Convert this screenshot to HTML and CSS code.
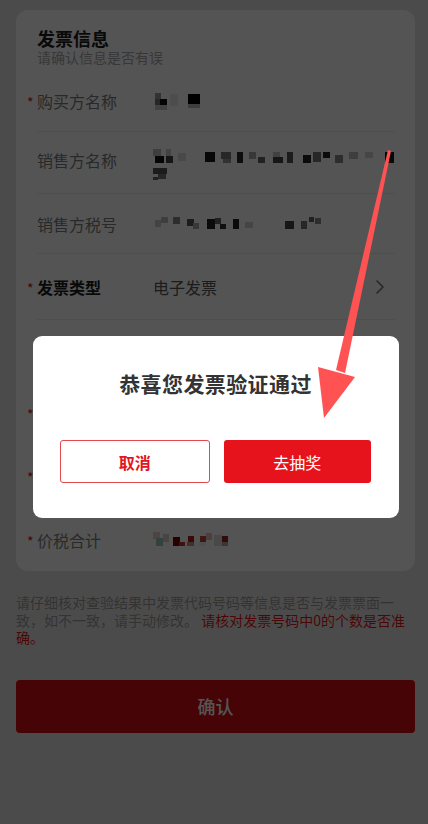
FILE: index.html
```html
<!DOCTYPE html>
<html lang="zh-CN">
<head>
<meta charset="utf-8">
<meta name="viewport" content="width=device-width, initial-scale=1">
<title>发票信息</title>
<link rel="stylesheet" href="styles.css">
</head>
<body>
<div class="page">
  <section class="card">
    <div class="card-head">
      <h1 class="card-title">发票信息</h1>
      <p class="card-sub">请确认信息是否有误</p>
    </div>

    <div class="row">
      <span class="label"><span class="star">*</span>购买方名称</span>
      <span class="value">
        <svg class="mosaic" width="60" height="20" viewBox="0 0 60 20">
          <rect x="2" y="2" width="6" height="6" fill="#9a9a9a"/>
          <rect x="2" y="8" width="5" height="6" fill="#777"/>
          <rect x="7" y="8" width="7" height="6" fill="#111"/>
          <rect x="2" y="14" width="12" height="5" fill="#c8c8c8"/>
          <rect x="17" y="3" width="8" height="12" fill="#e8e8e8"/>
          <rect x="35" y="3" width="12" height="10" fill="#000"/>
          <rect x="35" y="13" width="12" height="4" fill="#bbb"/>
        </svg>
      </span>
    </div>

    <div class="row row-top">
      <span class="label">销售方名称</span>
      <span class="value">
        <svg class="mosaic" width="242" height="34" viewBox="0 0 242 34">
          <rect x="0" y="0" width="8" height="7" fill="#bbb"/>
          <rect x="2" y="7" width="9" height="7" fill="#111"/>
          <rect x="13" y="7" width="7" height="7" fill="#444"/>
          <rect x="13" y="0" width="5" height="7" fill="#ccc"/>
          <rect x="25" y="4" width="8" height="8" fill="#ddd"/>
          <rect x="52" y="3" width="10" height="10" fill="#1a1a1a"/>
          <rect x="68" y="3" width="10" height="7" fill="#777"/>
          <rect x="70" y="10" width="8" height="4" fill="#999"/>
          <rect x="84" y="3" width="6" height="11" fill="#2a2a2a"/>
          <rect x="96" y="3" width="7" height="7" fill="#aaa"/>
          <rect x="105" y="8" width="7" height="6" fill="#666"/>
          <rect x="120" y="3" width="7" height="7" fill="#c4c4c4"/>
          <rect x="120" y="8" width="10" height="6" fill="#444"/>
          <rect x="134" y="3" width="6" height="11" fill="#555"/>
          <rect x="150" y="6" width="8" height="8" fill="#222"/>
          <rect x="160" y="3" width="8" height="10" fill="#777"/>
          <rect x="170" y="3" width="7" height="6" fill="#222"/>
          <rect x="182" y="6" width="8" height="8" fill="#888"/>
          <rect x="196" y="3" width="9" height="7" fill="#bbb"/>
          <rect x="212" y="3" width="8" height="6" fill="#d4d4d4"/>
          <rect x="232" y="3" width="9" height="11" fill="#1a1a1a"/>
          <rect x="0" y="19" width="14" height="6" fill="#555"/>
          <rect x="5" y="25" width="8" height="5" fill="#777"/>
          <rect x="0" y="28" width="5" height="3" fill="#666"/>
        </svg>
      </span>
    </div>

    <div class="row row-short">
      <span class="label">销售方税号</span>
      <span class="value">
        <svg class="mosaic" width="180" height="16" viewBox="0 0 180 16">
          <rect x="2" y="4" width="6" height="7" fill="#ccc"/>
          <rect x="8" y="1" width="7" height="6" fill="#bbb"/>
          <rect x="20" y="1" width="7" height="7" fill="#888"/>
          <rect x="34" y="3" width="7" height="7" fill="#555"/>
          <rect x="40" y="7" width="6" height="6" fill="#aaa"/>
          <rect x="54" y="3" width="8" height="10" fill="#222"/>
          <rect x="62" y="2" width="6" height="6" fill="#666"/>
          <rect x="67" y="8" width="6" height="5" fill="#333"/>
          <rect x="80" y="3" width="6" height="10" fill="#222"/>
          <rect x="92" y="6" width="8" height="6" fill="#d0d0d0"/>
          <rect x="132" y="5" width="9" height="8" fill="#444"/>
          <rect x="148" y="5" width="6" height="8" fill="#777"/>
          <rect x="156" y="1" width="5" height="5" fill="#666"/>
          <rect x="162" y="2" width="6" height="6" fill="#888"/>
        </svg>
      </span>
    </div>

    <div class="row row-select">
      <span class="label label-strong"><span class="star">*</span>发票类型</span>
      <span class="value value-text">电子发票</span>
      <svg class="chevron" width="10" height="16" viewBox="0 0 10 16">
        <path d="M2 2 L8 8 L2 14" fill="none" stroke="#777" stroke-width="1.6" stroke-linecap="round" stroke-linejoin="round"/>
      </svg>
    </div>

    <div class="row">
      <span class="label">发票代码</span>
      <span class="value value-text">请输入发票代码</span>
    </div>

    <div class="row">
      <span class="label"><span class="star">*</span>发票号码</span>
      <span class="value value-text">请输入发票号码</span>
    </div>

    <div class="row row-tall">
      <span class="label"><span class="star">*</span>开票日期</span>
      <span class="value value-text">请选择开票日期</span>
    </div>

    <div class="row row-last">
      <span class="label"><span class="star">*</span>价税合计</span>
      <span class="value">
        <svg class="mosaic" width="90" height="16" viewBox="0 0 90 16">
          <rect x="0" y="0" width="7" height="7" fill="#ecc"/>
          <rect x="3" y="6" width="7" height="8" fill="#9cb"/>
          <rect x="10" y="2" width="6" height="8" fill="#dcc"/>
          <rect x="20" y="5" width="7" height="9" fill="#700"/>
          <rect x="26" y="10" width="6" height="4" fill="#b33"/>
          <rect x="35" y="4" width="6" height="6" fill="#a22"/>
          <rect x="34" y="10" width="7" height="4" fill="#c88"/>
          <rect x="47" y="4" width="6" height="6" fill="#b44"/>
          <rect x="46" y="10" width="7" height="4" fill="#eee"/>
          <rect x="53" y="1" width="6" height="7" fill="#ebb"/>
          <rect x="61" y="3" width="8" height="11" fill="#ddd"/>
          <rect x="69" y="4" width="6" height="6" fill="#922"/>
          <rect x="69" y="10" width="6" height="4" fill="#c99"/>
        </svg>
      </span>
    </div>
  </section>

  <p class="notice">请仔细核对查验结果中发票代码号码等信息是否与发票票面一致，如不一致，请手动修改。 <span class="notice-red">请核对发票号码中0的个数是否准确。</span></p>

  <button class="submit" type="button">确认</button>
</div>

<div class="overlay">
  <div class="modal">
    <h2 class="modal-title">恭喜您发票验证通过</h2>
    <div class="modal-actions">
      <button class="btn btn-ghost" type="button">取消</button>
      <button class="btn btn-primary" type="button">去抽奖</button>
    </div>
  </div>
  <svg class="arrow" width="428" height="824" viewBox="0 0 428 824">
    <polygon points="388,150 391,151 345,373 336,370" fill="#ff5252"/>
    <polygon points="318,367 355,377 324,418" fill="#ff5252"/>
  </svg>
</div>
</body>
</html>
```

FILE: styles.css
```css
* { box-sizing: border-box; }

html, body {
  margin: 0;
  padding: 0;
}

body {
  background: #e4e4e4;
  font-family: "Noto Sans CJK SC", "Noto Sans", sans-serif;
  width: 428px;
  height: 824px;
  overflow: hidden;
}

.page {
  padding: 10px 13px 0 16px;
}

.card {
  background: #ffffff;
  border-radius: 12px;
  padding: 17px 20px 0 21px;
}

.card-head {
  margin-bottom: 5px;
}

.card-title {
  margin: 0;
  font-size: 18px;
  line-height: 22px;
  font-weight: 700;
  color: #1e1e1e;
}

.card-sub {
  margin: 0;
  font-size: 14px;
  line-height: 16px;
  color: #a8a8a8;
}

.row {
  display: flex;
  align-items: center;
  height: 62px;
  border-bottom: 1px solid #ececec;
}

.row-top {
  align-items: flex-start;
  padding-top: 17px;
}

.row-short { height: 60px; }
.row-select { height: 66px; }
.row-tall { height: 65px; }

.row-last {
  border-bottom: none;
}

.label {
  width: 116px;
  flex: none;
  font-size: 16px;
  line-height: 22px;
  color: #7d7d7d;
  display: flex;
  align-items: center;
}

.label-strong {
  color: #1e1e1e;
  font-weight: 700;
}

.star {
  width: 9px;
  margin-left: -10px;
  margin-right: 1px;
  color: #d51515;
  font-size: 14px;
  font-weight: 400;
  line-height: 14px;
  align-self: flex-start;
  padding-top: 5px;
}

.value {
  flex: 1;
  display: flex;
  align-items: center;
}

.value-text {
  font-size: 16px;
  line-height: 22px;
  color: #555;
}

.mosaic {
  display: block;
}

.chevron {
  flex: none;
  margin-right: 10px;
}

.notice {
  margin: 23px 0 0 0;
  padding-right: 3px;
  font-size: 14px;
  line-height: 17.5px;
  color: #9c9c9c;
}

.notice-red {
  color: #e21818;
}

.submit {
  display: block;
  width: 100%;
  height: 53px;
  margin-top: 33px;
  border: none;
  border-radius: 4px;
  background: #d40d15;
  color: #ffffff;
  font-family: inherit;
  font-size: 18px;
  font-weight: 500;
}

.overlay {
  position: fixed;
  inset: 0;
  background: rgba(0, 0, 0, 0.67);
  display: flex;
  align-items: flex-start;
  padding: 336px 29px 0 33px;
}

.modal {
  width: 366px;
  background: #ffffff;
  border-radius: 9px;
  padding: 32px 28px 35px 27px;
}

.modal-title {
  margin: 0;
  text-align: center;
  font-size: 21px;
  line-height: 30px;
  font-weight: 700;
  color: #333;
  letter-spacing: 0.4px;
}

.modal-actions {
  display: flex;
  gap: 14px;
  margin-top: 42px;
}

.btn {
  flex: 1;
  height: 43px;
  border-radius: 3px;
  font-family: inherit;
  font-size: 16px;
}

.btn-ghost {
  background: #ffffff;
  border: 1px solid #e5474d;
  color: #e2161e;
  font-weight: 700;
}

.btn-primary {
  background: #e7131c;
  border: none;
  color: #ffffff;
  font-weight: 400;
}

.arrow {
  position: absolute;
  left: 0;
  top: 0;
  pointer-events: none;
}
```
